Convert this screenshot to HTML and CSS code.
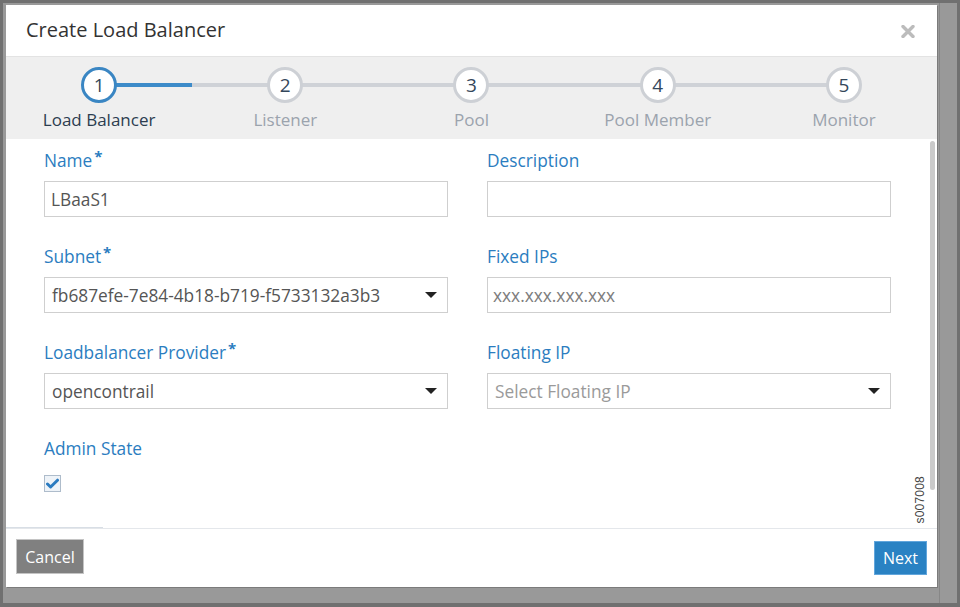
FILE: index.html
```html
<!DOCTYPE html>
<html lang="en">
<head>
<meta charset="utf-8">
<title>Create Load Balancer</title>
<link rel="stylesheet" href="styles.css">
</head>
<body>
<div class="frame">
  <div class="dialog">
    <header class="dlg-head">
      <h1 class="dlg-title">Create Load Balancer</h1>
      <span class="close" aria-label="Close">
        <svg width="14" height="13" viewBox="0 0 14 13"><path d="M2 1.5 L12 11.5 M12 1.5 L2 11.5" stroke="#bcbcbc" stroke-width="3.4" stroke-linecap="round"/></svg>
      </span>
    </header>

    <ol class="steps">
      <li class="step active"><span class="circle">1</span><span class="step-label">Load Balancer</span></li>
      <li class="step"><span class="circle">2</span><span class="step-label">Listener</span></li>
      <li class="step"><span class="circle">3</span><span class="step-label">Pool</span></li>
      <li class="step"><span class="circle">4</span><span class="step-label">Pool Member</span></li>
      <li class="step"><span class="circle">5</span><span class="step-label">Monitor</span></li>
    </ol>

    <div class="body">
      <div class="form-grid">
        <div class="field">
          <div class="label">Name<span class="req">*</span></div>
          <div class="input">LBaaS1</div>
        </div>
        <div class="field">
          <div class="label">Description</div>
          <div class="input"></div>
        </div>
        <div class="field">
          <div class="label">Subnet<span class="req">*</span></div>
          <div class="input select">fb687efe-7e84-4b18-b719-f5733132a3b3<span class="caret"></span></div>
        </div>
        <div class="field">
          <div class="label">Fixed IPs</div>
          <div class="input placeholder-ip">xxx.xxx.xxx.xxx</div>
        </div>
        <div class="field">
          <div class="label">Loadbalancer Provider<span class="req">*</span></div>
          <div class="input select">opencontrail<span class="caret"></span></div>
        </div>
        <div class="field">
          <div class="label">Floating IP</div>
          <div class="input select placeholder">Select Floating IP<span class="caret"></span></div>
        </div>
        <div class="field">
          <div class="label">Admin State</div>
          <span class="checkbox">
            <svg width="13" height="11" viewBox="0 0 13 11"><path d="M1.5 6 L4.6 9 L11.5 2.2" fill="none" stroke="#2b7bc0" stroke-width="3" stroke-linecap="round" stroke-linejoin="round"/></svg>
          </span>
        </div>
      </div>
      <span class="scroll-thumb"></span>
      <span class="figid">s007008</span>
      <span class="edge-mark"></span>
    </div>

    <footer class="dlg-foot">
      <button class="btn btn-cancel" type="button">Cancel</button>
      <button class="btn btn-next" type="button">Next</button>
    </footer>
  </div>
</div>
</body>
</html>
```

FILE: styles.css
```css
* { box-sizing: border-box; }

html, body {
  margin: 0;
  padding: 0;
  background: #6f6f6f;
}

body {
  font-family: "Open Sans", "Noto Sans", sans-serif;
  width: 960px;
  height: 607px;
  overflow: hidden;
}

.frame {
  width: 960px;
  height: 607px;
  border: 3px solid #707070;
  border-bottom-width: 4px;
  background-color: #999999;
  background-image: linear-gradient(to right, transparent 936px, #878787 936px, #878787 937px, transparent 937px);
  padding: 2px 0 0 3px;
}

.dialog {
  width: 931px;
  height: 582px;
  background: #ffffff;
  box-shadow: 1px 1px 0 #7b7b7b;
  display: flex;
  flex-direction: column;
}

/* header */
.dlg-head {
  height: 52px;
  border-bottom: 1px solid #e3e3e3;
  display: flex;
  align-items: center;
  justify-content: space-between;
  padding: 0 22px 1px 20px;
}

.dlg-title {
  margin: 0;
  font-size: 20px;
  font-weight: 400;
  color: #333333;
  line-height: 26px;
}

.close {
  display: flex;
  width: 14px;
  height: 13px;
  margin-top: 2px;
}

/* stepper */
.steps {
  list-style: none;
  margin: 0;
  padding: 0;
  height: 82px;
  background: #efefef;
  display: grid;
  grid-template-columns: repeat(5, 1fr);
}

.step {
  position: relative;
  display: flex;
  flex-direction: column;
  align-items: center;
}

.step::before,
.step::after {
  content: "";
  position: absolute;
  top: 26px;
  height: 4px;
  background: #cfd2d7;
}

.step::before { left: 0; width: 50%; }
.step::after { left: 50%; right: 0; }
.step:first-child::before { display: none; }
.step:last-child::after { display: none; }
.step.active::after { background: #3d8bc9; }

.circle {
  position: relative;
  z-index: 1;
  margin-top: 10px;
  width: 36px;
  height: 36px;
  border: 3px solid #cdd0d5;
  border-radius: 50%;
  background: #ffffff;
  display: flex;
  align-items: center;
  justify-content: center;
  font-size: 19px;
  color: #34475b;
  line-height: 1;
}

.step.active .circle { border-color: #3a86c3; }

.step-label {
  margin-top: 6px;
  font-size: 17px;
  line-height: 22px;
  color: #9ba3ad;
  white-space: nowrap;
}

.step.active .step-label { color: #2c3d50; }

/* body */
.body {
  position: relative;
  height: 389px;
  padding: 11px 0 0 38px;
}

.form-grid {
  display: grid;
  grid-template-columns: 404px 404px;
  column-gap: 39px;
  row-gap: 29px;
}

.label {
  font-size: 17.3px;
  line-height: 22px;
  color: #2b7dc0;
  margin-bottom: 9px;
  white-space: nowrap;
}

.req {
  font-size: 15px;
  font-weight: 700;
  vertical-align: top;
  line-height: 14px;
  margin-left: 2px;
  position: relative;
  top: -1px;
}

.input {
  position: relative;
  height: 36px;
  border: 1px solid #cfcfcf;
  padding: 0 6px;
  display: flex;
  align-items: center;
  font-size: 17.3px;
  color: #555555;
  white-space: nowrap;
}

.input.select { padding-left: 7px; }
.input.placeholder { color: #9a9a9a; }
.placeholder-ip { color: #7d7d7d; padding-left: 5px; }

.caret {
  position: absolute;
  right: 10px;
  top: 14px;
  width: 0;
  height: 0;
  border-left: 6px solid transparent;
  border-right: 6px solid transparent;
  border-top: 6px solid #222222;
}

.checkbox {
  margin-top: 15px;
  width: 17px;
  height: 17px;
  border: 1px solid #aebccb;
  background: #eef3f8;
  display: flex;
  align-items: center;
  justify-content: center;
}

.scroll-thumb {
  position: absolute;
  right: 2px;
  top: 2px;
  width: 5px;
  height: 349px;
  border-radius: 3px;
  background: #cacaca;
}

.figid {
  position: absolute;
  right: 10px;
  bottom: 5px;
  writing-mode: vertical-rl;
  transform: rotate(180deg);
  font-family: "Liberation Sans", Arial, sans-serif;
  font-size: 12px;
  color: #444444;
  letter-spacing: 0.2px;
}

.edge-mark {
  position: absolute;
  left: 0;
  bottom: 0;
  width: 97px;
  height: 1px;
  background: #d8dee5;
}

/* footer */
.dlg-foot {
  border-top: 1px solid #e4e7eb;
  height: 59px;
  display: flex;
  justify-content: space-between;
  align-items: flex-start;
  padding: 10px 10px 0 10px;
}

.btn {
  font-family: "Open Sans", "Noto Sans", sans-serif;
  font-size: 16px;
  color: #ffffff;
  border-radius: 0;
  padding: 0;
  margin: 0;
  line-height: 1;
  display: flex;
  align-items: center;
  justify-content: center;
}

.btn-cancel {
  width: 68px;
  height: 35px;
  background: #808080;
  border: 1px solid #c4c4c4;
}

.btn-next {
  margin-top: 2px;
  width: 53px;
  height: 34px;
  background: #2a82c3;
  border: 1px solid #62a6dc;
}
```
